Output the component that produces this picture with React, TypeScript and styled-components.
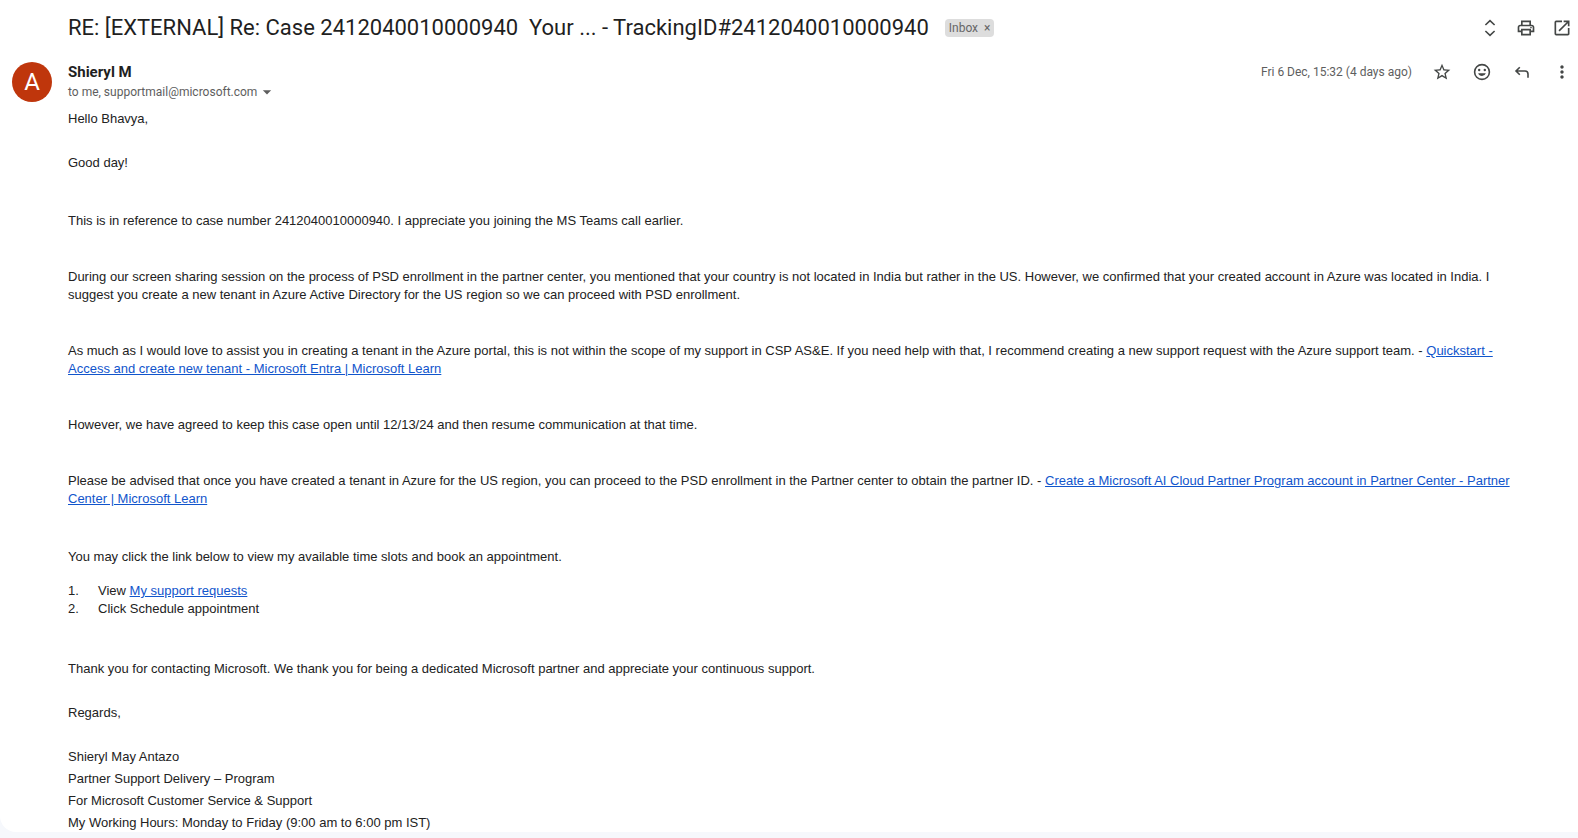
import React from "react";
import styled, { createGlobalStyle } from "styled-components";
import {
  MdArrowDropDown,
  MdMoreVert,
  MdOpenInNew,
  MdOutlinePrint,
  MdStarBorder,
} from "react-icons/md";

const GlobalStyle = createGlobalStyle`
  *, *::before, *::after { box-sizing: border-box; }
  body {
    margin: 0;
    background: #f6f8fc;
    color: #222222;
    font-family: "Liberation Sans", Arial, sans-serif;
  }
`;

const Card = styled.main`
  background: #ffffff;
  border-bottom-left-radius: 16px;
  margin-bottom: 6px;
  padding-left: 68px;
`;

const SubjectBar = styled.header`
  display: flex;
  align-items: center;
  justify-content: space-between;
  height: 56px;
`;

const SubjectGroup = styled.div`
  display: flex;
  align-items: center;
  gap: 16px;
  min-width: 0;
`;

const Subject = styled.h1`
  margin: 0;
  font: 400 22px/28px Roboto, sans-serif;
  color: #1f1f1f;
  white-space: pre-wrap;
`;

const LabelChip = styled.button`
  display: flex;
  align-items: center;
  gap: 6px;
  height: 18px;
  padding: 0 4px;
  border: 0;
  border-radius: 4px;
  background: #dddddd;
  color: #666666;
  font: 400 12px/18px Roboto, sans-serif;
`;

const Actions = styled.div<{ $gap: number }>`
  display: flex;
  align-items: center;
  gap: ${({ $gap }) => $gap}px;
`;

const IconButton = styled.button`
  display: flex;
  align-items: center;
  justify-content: center;
  width: 32px;
  height: 32px;
  padding: 0;
  border: 0;
  background: none;
  color: #444746;
`;

const Sender = styled.section`
  display: flex;
  align-items: flex-start;
  justify-content: space-between;
  margin-left: -56px;
`;

const SenderGroup = styled.div`
  display: flex;
  gap: 16px;
  padding-top: 6px;
`;

const Avatar = styled.div`
  width: 40px;
  height: 40px;
  border-radius: 50%;
  background: #bf360c;
  color: #ffffff;
  font: 400 24px/40px Roboto, sans-serif;
  text-align: center;
`;

const SenderName = styled.h2`
  margin: 0;
  font: 700 15px/20px Roboto, sans-serif;
  color: #1f1f1f;
`;

const Recipients = styled.button`
  display: flex;
  align-items: center;
  height: 20px;
  padding: 0;
  border: 0;
  background: none;
  color: #5e5e5e;
  font: 400 12px/20px Roboto, sans-serif;
`;

const Sent = styled.time`
  margin-right: 6px;
  color: #5e5e5e;
  font: 400 12px/20px Roboto, sans-serif;
`;

const Body = styled.article`
  padding: 8px 56px 0 0;
  font-size: 13px;
  line-height: 18px;
`;

const Paragraph = styled.p<{ $after?: number }>`
  margin: 0 0 ${({ $after = 38 }) => $after}px;
`;

const Link = styled.a`
  color: #1155cc;
`;

const Steps = styled.ol`
  margin: 0 0 42px;
  padding: 0;
  list-style: none;
  counter-reset: step;
`;

const Step = styled.li`
  display: flex;
  counter-increment: step;
  white-space: pre;

  &::before {
    content: counter(step) ".";
    width: 30px;
  }
`;

const Signature = styled.address`
  display: flex;
  flex-direction: column;
  gap: 4px;
  font-style: normal;
`;

const LineIcon = styled.svg.attrs({ width: 20, height: 20, viewBox: "0 0 20 20", "aria-hidden": true })`
  fill: none;
  stroke: currentColor;
  stroke-width: 1.6;
`;

const ExpandIcon = () => (
  <LineIcon>
    <path d="M5.4 7 10 2.6 14.6 7M5.4 13l4.6 4.4 4.6-4.4" />
  </LineIcon>
);

const SmileIcon = () => (
  <LineIcon>
    <circle cx="10" cy="10" r="7.4" />
    <g fill="currentColor" stroke="none">
      <circle cx="7.2" cy="8" r="1.2" />
      <circle cx="12.8" cy="8" r="1.2" />
      <path d="M6.2 11.2h7.6a4 4 0 0 1-7.6 0z" />
    </g>
  </LineIcon>
);

const ReplyIcon = () => (
  <LineIcon>
    <path d="M7.8 5.2 4 9l3.8 3.8M4 9h9a3 3 0 0 1 3 3v3.8" />
  </LineIcon>
);

export default function App() {
  return (
    <>
      <GlobalStyle />
      <Card>
        <SubjectBar>
          <SubjectGroup>
            <Subject>{"RE: [EXTERNAL] Re: Case 2412040010000940  Your ... - TrackingID#2412040010000940"}</Subject>
            <LabelChip type="button">
              <span>Inbox</span>
              <span>×</span>
            </LabelChip>
          </SubjectGroup>
          <Actions $gap={4}>
            <IconButton type="button" aria-label="Expand all"><ExpandIcon /></IconButton>
            <IconButton type="button" aria-label="Print all"><MdOutlinePrint size={20} /></IconButton>
            <IconButton type="button" aria-label="Open in new window"><MdOpenInNew size={20} /></IconButton>
          </Actions>
        </SubjectBar>

        <Sender>
          <SenderGroup>
            <Avatar>A</Avatar>
            <div>
              <SenderName>Shieryl M</SenderName>
              <Recipients type="button">
                to me, supportmail@microsoft.com
                <MdArrowDropDown size={20} />
              </Recipients>
            </div>
          </SenderGroup>
          <Actions $gap={8}>
            <Sent dateTime="2024-12-06T15:32">Fri 6 Dec, 15:32 (4 days ago)</Sent>
            <IconButton type="button" aria-label="Star"><MdStarBorder size={20} /></IconButton>
            <IconButton type="button" aria-label="Add reaction"><SmileIcon /></IconButton>
            <IconButton type="button" aria-label="Reply"><ReplyIcon /></IconButton>
            <IconButton type="button" aria-label="More"><MdMoreVert size={20} /></IconButton>
          </Actions>
        </Sender>

        <Body>
          <Paragraph $after={26}>Hello Bhavya,</Paragraph>
          <Paragraph $after={40}>Good day!</Paragraph>
          <Paragraph>
            This is in reference to case number 2412040010000940. I appreciate you joining the MS Teams call earlier.
          </Paragraph>
          <Paragraph>
            During our screen sharing session on the process of PSD enrollment in the partner center, you mentioned that
            your country is not located in India but rather in the US. However, we confirmed that your created account in
            Azure was located in India. I suggest you create a new tenant in Azure Active Directory for the US region so
            we can proceed with PSD enrollment.
          </Paragraph>
          <Paragraph>
            As much as I would love to assist you in creating a tenant in the Azure portal, this is not within the scope
            of my support in CSP AS&amp;E. If you need help with that, I recommend creating a new support request with the
            Azure support team. -{" "}
            <Link href="#quickstart">Quickstart - Access and create new tenant - Microsoft Entra | Microsoft Learn</Link>
          </Paragraph>
          <Paragraph>
            However, we have agreed to keep this case open until 12/13/24 and then resume communication at that time.
          </Paragraph>
          <Paragraph $after={40}>
            Please be advised that once you have created a tenant in Azure for the US region, you can proceed to the PSD
            enrollment in the Partner center to obtain the partner ID. -{" "}
            <Link href="#partner-account">
              Create a Microsoft AI Cloud Partner Program account in Partner Center - Partner Center | Microsoft Learn
            </Link>
          </Paragraph>
          <Paragraph $after={16}>
            You may click the link below to view my available time slots and book an appointment.
          </Paragraph>
          <Steps>
            <Step>View <Link href="#support-requests">My support requests</Link></Step>
            <Step>Click Schedule appointment</Step>
          </Steps>
          <Paragraph $after={26}>
            Thank you for contacting Microsoft. We thank you for being a dedicated Microsoft partner and appreciate your
            continuous support.
          </Paragraph>
          <Paragraph $after={26}>Regards,</Paragraph>
          <Signature>
            <span>Shieryl May Antazo</span>
            <span>Partner Support Delivery – Program</span>
            <span>For Microsoft Customer Service &amp; Support</span>
            <span>My Working Hours: Monday to Friday (9:00 am to 6:00 pm IST)</span>
          </Signature>
        </Body>
      </Card>
    </>
  );
}
